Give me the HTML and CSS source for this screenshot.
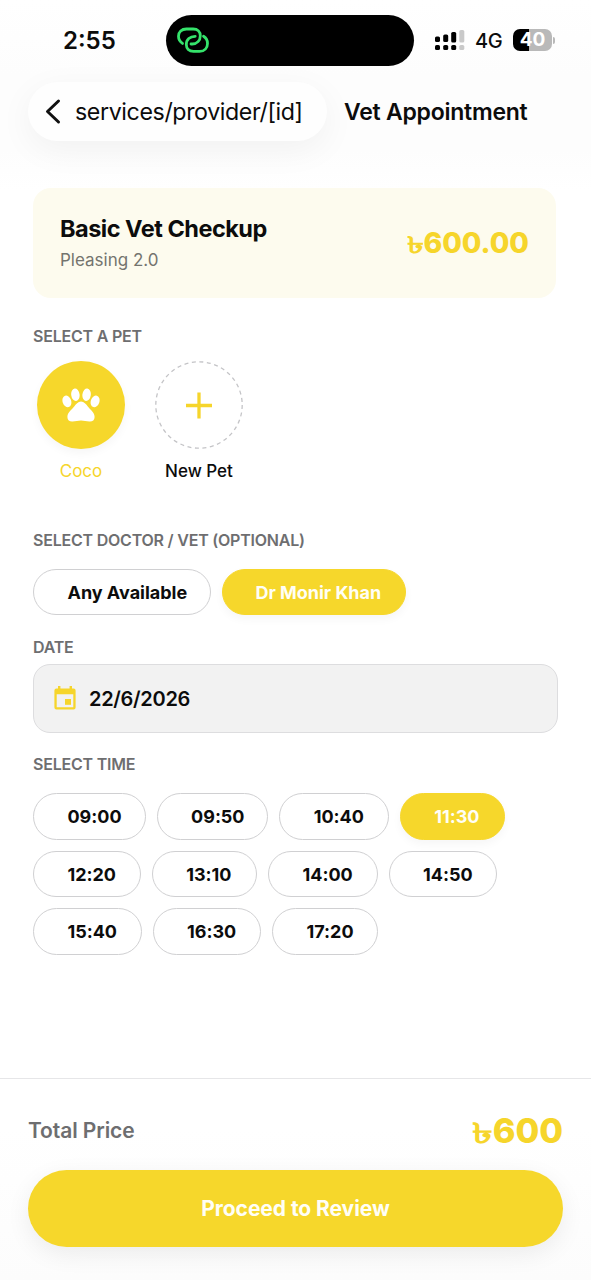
FILE: index.html
```html
<!DOCTYPE html>
<html lang="en">
<head>
<meta charset="utf-8">
<meta name="viewport" content="width=device-width, initial-scale=1">
<title>Vet Appointment</title>
<link rel="stylesheet" href="styles.css">
</head>
<body>
<div class="screen">
  <div class="status">
    <span class="clock">2:55</span>
    <div class="island">
      <svg class="link" viewBox="0 0 32 26" fill="none" stroke="#35e36b" stroke-width="2.8" stroke-linecap="round">
        <path d="M5.500 16.400C2.800 14.600 1.500 12.200 1.500 9.300C1.500 4.900 4.600 2 9.400 2H16.200C20.800 2 23.300 5 23.300 8.700C23.300 13.500 20 17 15.300 17H14"/>
        <path d="M26.500 9.300C29.200 11 30.500 13.500 30.500 16.400C30.500 20.900 27.500 24.400 22.600 24.400H16.500C12 24.400 9.300 21.300 9.300 17.600C9.300 12.400 12.900 9.300 18.200 9.300"/>
      </svg>
    </div>
    <svg class="signal" viewBox="0 0 32 22">
      <g fill="#000"><rect x="1" y="7.500" width="5" height="5.500" rx="1.600"/><rect x="9.200" y="5.500" width="5" height="7.500" rx="1.600"/><rect x="17.200" y="3" width="5" height="10.500" rx="1.600"/><rect x="1" y="16" width="5" height="5" rx="1.600"/><rect x="9.200" y="16" width="5" height="5" rx="1.600"/><rect x="17.200" y="16" width="5" height="5" rx="1.600"/></g>
      <g fill="#c9c9c9"><rect x="25.300" y="1" width="5" height="12.500" rx="1.600"/><rect x="25.300" y="16" width="5" height="5" rx="1.600"/></g>
    </svg>
    <span class="network">4G</span>
    <div class="battery"><span>40</span></div>
    <i class="battery-tip"></i>
  </div>

  <header class="nav">
    <div class="back">
      <svg class="chevron" viewBox="0 0 18 28" fill="none" stroke="#111" stroke-width="3" stroke-linecap="round" stroke-linejoin="round"><path d="M14.500 3L3.500 13.500L14.500 24"/></svg>
      <span>services/provider/[id]</span>
    </div>
    <h1 class="title">Vet Appointment</h1>
  </header>

  <main class="content">
    <section class="service">
      <div class="service-text">
        <h2 class="service-name">Basic Vet Checkup</h2>
        <p class="service-place">Pleasing 2.0</p>
      </div>
      <div class="price"><span class="taka">৳</span><span>600.00</span></div>
    </section>

    <h3 class="label label-pet">SELECT A PET</h3>
    <div class="pets">
      <div class="pet selected">
        <div class="avatar">
          <svg class="paw" viewBox="0 0 38 34" fill="#fff">
            <ellipse cx="4.900" cy="13.400" rx="4.300" ry="6" transform="rotate(-18 4.900 13.400)"/>
            <ellipse cx="13.400" cy="6.700" rx="4.200" ry="6.300" transform="rotate(-7 13.400 6.700)"/>
            <ellipse cx="24.600" cy="6.700" rx="4.200" ry="6.300" transform="rotate(7 24.600 6.700)"/>
            <ellipse cx="33.100" cy="13.400" rx="4.300" ry="6" transform="rotate(18 33.100 13.400)"/>
            <path d="M19 13.600C22 13.600 24 16.200 26 18.800C28.200 21.600 32.600 24.500 32.600 29C32.600 32.200 30.300 33.700 27.500 33.500C24.200 33.300 22 32.400 19 32.400C16 32.400 13.800 33.300 10.500 33.500C7.700 33.700 5.400 32.200 5.400 29C5.400 24.500 9.800 21.600 12 18.800C14 16.200 16 13.600 19 13.600Z"/>
          </svg>
        </div>
        <span>Coco</span>
      </div>
      <div class="pet">
        <div class="avatar">
          <svg class="ring" viewBox="0 0 88 88" fill="none"><circle cx="44" cy="44" r="43.200" stroke="#c4c4c7" stroke-width="1.300" stroke-dasharray="4 3.540"/><path d="M44 31.500V57.500M31 44.500H57" stroke="#f6d52b" stroke-width="3.300"/></svg>
        </div>
        <span>New Pet</span>
      </div>
    </div>

    <h3 class="label">SELECT DOCTOR / VET (OPTIONAL)</h3>
    <div class="chips doctors">
      <div class="chip doctor-any">Any Available</div>
      <div class="chip active doctor-named">Dr Monir Khan</div>
    </div>

    <h3 class="label label-date">DATE</h3>
    <div class="date">
      <svg class="calendar" viewBox="0 0 22 24" fill="#f6d52b"><path fill-rule="evenodd" d="M4 0H6.400V2.400H15.600V0H18V2.400H19.600Q21.600 2.400 21.600 4.400V21.400Q21.600 23.400 19.600 23.400H2.400Q.4 23.400 .4 21.400V4.400Q.4 2.400 2.400 2.400H4ZM2.700 8.200V21.200H19.300V8.200Z"/><rect x="11" y="13" width="6" height="5.800"/></svg>
      <span>22/6/2026</span>
    </div>

    <h3 class="label label-time">SELECT TIME</h3>
    <div class="times">
      <div class="chips"><div class="chip t113">09:00</div><div class="chip t112">09:50</div><div class="chip t110">10:40</div><div class="chip active t106">11:30</div></div>
      <div class="chips"><div class="chip t108">12:20</div><div class="chip t106">13:10</div><div class="chip t110">14:00</div><div class="chip t109">14:50</div></div>
      <div class="chips"><div class="chip t109">15:40</div><div class="chip t109">16:30</div><div class="chip t107">17:20</div></div>
    </div>
  </main>

  <footer class="footer">
    <div class="total"><span class="total-label">Total Price</span><div class="total-value"><span class="taka">৳</span><span>600</span></div></div>
    <div class="proceed">Proceed to Review</div>
  </footer>
</div>
</body>
</html>
```
FILE: styles.css
```css
* { box-sizing: border-box; }
body { margin: 0; background: #fff; font-family: Inter, "Liberation Sans", sans-serif; color: #0c0c0c; }
h1, h2, h3, p { margin: 0; }
.screen { width: 591px; height: 1280px; display: flex; flex-direction: column; overflow: hidden; background: linear-gradient(#fff 0, #fdfdfd 75px, #fdfdfd 150px, #fff 190px); }

.status { height: 82px; flex: none; display: flex; align-items: center; padding: 0 0 0 63px; }
.clock { width: 103px; font-size: 24px; line-height: 28px; margin-top: -1px; font-weight: 600; }
.island { width: 248px; height: 51px; margin-top: -1px; border-radius: 26px; background: #000; padding: 12px 11px; }
.link { display: block; width: 32px; height: 26px; }
.signal { width: 32px; height: 22px; margin: -2px 0 0 20px; }
.network { width: 38px; margin-left: 9px; font-size: 20px; font-weight: 500; letter-spacing: -.3px; }
.battery { width: 39px; height: 22px; margin-top: -2px; border-radius: 7px; background: linear-gradient(90deg, #000 16px, #b9b9b9 16px); color: #fff; font-size: 19px; font-weight: 700; line-height: 22px; text-align: center; }
.battery-tip { width: 2px; height: 7px; margin: -2px 0 0 1px; border-radius: 0 3px 3px 0; background: #b9b9b9; }

.nav { height: 59px; flex: none; display: flex; align-items: center; padding-left: 28px; }
.back { width: 299px; height: 59px; border-radius: 30px; background: #fefefe; box-shadow: 0 9px 34px rgba(0, 0, 0, .05); display: flex; align-items: center; padding-left: 16px; font-size: 23.2px; letter-spacing: -.39px; white-space: nowrap; }
.chevron { width: 18px; height: 28px; margin-right: 13px; }
.title { margin-left: 17px; font-size: 23px; font-weight: 600; letter-spacing: -.24px; white-space: nowrap; }

.content { padding: 47px 33px 0; flex: 1; }
.service { height: 110px; border-radius: 18px; background: #fdfbee; margin-right: 2px; padding: 0 27px; display: flex; align-items: center; justify-content: space-between; }
.service-text { padding-bottom: 1px; }
.service-name { font-size: 23.5px; line-height: 30px; font-weight: 750; letter-spacing: -.5px; }
.service-place { margin-top: 5px; font-size: 17px; line-height: 22px; color: #74746e; }
.price { display: flex; align-items: baseline; height: 34px; line-height: 34px; font-size: 28.4px; font-weight: 800; color: #f6d52b; white-space: nowrap; }
.taka { font-size: .82em; font-weight: 600; line-height: 1; transform: scaleX(1.5); transform-origin: right; }

.label { font-size: 16px; line-height: 20px; font-weight: 600; letter-spacing: -.22px; color: #6e6e70; white-space: nowrap; }
.label-pet { margin-top: 28px; }
.pets { display: flex; gap: 22px; height: 184px; padding-top: 15px; }
.pet { width: 96px; display: flex; flex-direction: column; align-items: center; font-size: 17px; font-weight: 500; line-height: 22px; }
.avatar { width: 88px; height: 88px; margin-bottom: 11px; border-radius: 50%; display: flex; align-items: center; justify-content: center; }
.selected { color: #f6d52b; font-weight: 400; }
.selected .avatar { background: #f6d72b; box-shadow: 0 4px 10px rgba(0, 0, 0, .04); }
.paw { width: 38px; height: 34px; }
.ring { width: 88px; height: 88px; }

.chips { display: flex; gap: 11px; }
.chip { height: 46.5px; flex: none; border: 1.5px solid #d0d0d2; border-radius: 24px; background: #fff; padding: 0 0 0 33.5px; line-height: 45px; font-size: 18px; font-weight: 700; letter-spacing: -.02px; white-space: nowrap; }
.active { border-color: #f6d72b; background: #f6d72b; color: #fffef6; box-shadow: 0 4px 10px rgba(0, 0, 0, .04); }
.doctors { height: 47px; margin-top: 18px; align-items: flex-end; }
.doctors .chip { font-size: 18px; font-weight: 650; }
.doctors .active { padding-left: 32.5px; }
.doctor-any { width: 178px; }
.doctor-named { width: 184px; }
.label-date { margin-top: 22px; }
.date { height: 69px; margin-top: 7px; border: 1.5px solid #dddddf; border-radius: 17px; background: #f2f2f2; display: flex; align-items: center; padding-left: 20px; gap: 13px; font-size: 20px; font-weight: 560; letter-spacing: -.3px; }
.calendar { width: 22px; height: 24px; position: relative; top: -1px; }
.label-time { margin-top: 21px; }
.times { display: grid; gap: 11px; margin-top: 19px; }
.times .chips { gap: 11px; }
.t113 { width: 112.6px; }
.t112 { width: 111.6px; }
.t110 { width: 109.5px; }
.t109 { width: 108.5px; }
.t108 { width: 107.7px; }
.t107 { width: 106.3px; }
.t106 { width: 105.4px; }

.footer { height: 202px; flex: none; border-top: 1.5px solid #e6e6e8; padding: 30px 28px 0; background: linear-gradient(#fff 50px, #fcfcfc); }
.total { height: 42px; display: flex; align-items: center; justify-content: space-between; }
.total-label { font-size: 21px; font-weight: 600; letter-spacing: -.1px; color: #6e6e70; }
.total-value { display: flex; align-items: baseline; height: 42px; line-height: 43px; font-size: 34.4px; font-weight: 800; color: #f6d52b; }
.proceed { height: 77px; margin-top: 19px; border-radius: 39px; background: #f6d72b; box-shadow: 0 7px 24px rgba(0, 0, 0, .07); color: #fffef6; text-align: center; line-height: 77px; font-size: 21px; font-weight: 700; letter-spacing: -.06px; }
```
